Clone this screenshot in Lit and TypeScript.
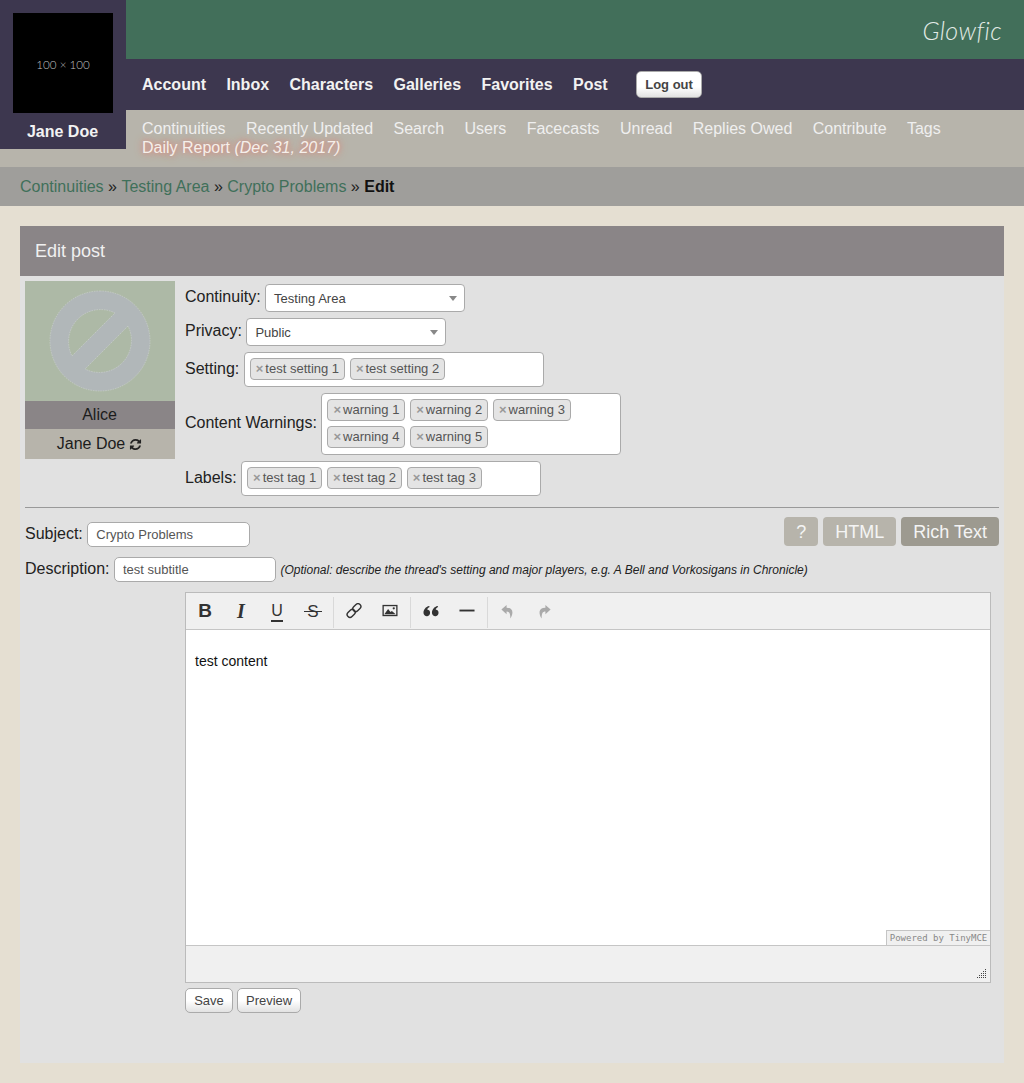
import { LitElement, html, css, svg } from "lit";
import { customElement } from "lit/decorators.js";

const tag = (t: string) => html`<span class="tag"><b>×</b>${t}</span>`;

@customElement("app-root")
export class AppRoot extends LitElement {
  static styles = css`
    :host { display: block; font-family: "Liberation Sans", Arial, sans-serif; font-size: 16px; color: #222; background: #e5dfd2; min-height: 1083px; position: relative; }
    * { box-sizing: border-box; }
    .user { position: absolute; left: 0; top: 0; width: 126px; height: 149px; background: #3d374f; padding-top: 13px; display: flex; flex-direction: column; align-items: center; z-index: 2; }
    .ph { width: 100px; height: 100px; background: #000; color: #c0c0c0; font: 300 11.6px "Lato", sans-serif; padding-top: 2px; display: flex; align-items: center; justify-content: center; }
    .uname { color: #f2f2f2; font-weight: bold; margin-top: 10px; line-height: 18px; padding-right: 1px; }
    .brand { height: 59px; background: #426f5a; display: flex; justify-content: flex-end; align-items: center; padding: 0 22px 0 0; }
    .logo { font-family: "Lato", sans-serif; font-weight: 300; font-style: italic; font-size: 25px; letter-spacing: 0.4px; color: #e3ebe6; }
    .nav { height: 51px; background: #3d374f; padding: 1px 0 0 142px; display: flex; align-items: center; color: #f2f2f2; font-weight: bold; gap: 20.4px; }
    .logout { margin: 0 0 1px 8px; height: 27px; width: 66px; border: 1px solid #aaa; border-radius: 5px; font: bold 13px "Liberation Sans", sans-serif; color: #444; background: linear-gradient(#fff 60%, #e2e2e2); padding: 0; }
    .sub { height: 57px; background: #b7b4ab; padding: 9px 60px 0 142px; color: #efefef; line-height: 19px; }
    .sub span { margin-right: 15.9px; display: inline-block; }
    .sub .daily { color: #f5efea; text-shadow: 0 0 5px #d98a7e, 0 0 8px #d98a7e; }
    .crumbs { height: 39px; background: #9f9e9b; padding-left: 20px; display: flex; align-items: center; white-space: pre; color: #222; }
    .crumbs a { color: #3f705a; }
    .crumbs strong { color: #111; }
    .card { margin: 20px 20px 0; background: #e1e1e1; height: 837px; }
    .title { height: 50px; background: #8a8587; color: #f0f0f0; font-size: 18px; padding-left: 15px; display: flex; align-items: center; }
    .body { padding: 5px; }
    .top { display: flex; gap: 10px; }
    .icon { width: 150px; flex: none; }
    .pic { height: 120px; background: #adb9a6; display: flex; align-items: center; justify-content: center; }
    .char { height: 28px; background: #8a8587; display: flex; align-items: center; justify-content: center; color: #1c1c1c; padding-right: 1px; }
    .alias { height: 30px; background: #b7b4ab; display: flex; align-items: center; justify-content: center; gap: 4px; color: #1c1c1c; padding-right: 1px; }
    .rows { display: flex; flex-direction: column; gap: 6px; padding-top: 3px; }
    .row { display: flex; align-items: center; gap: 4.5px; }
    .row > label { padding-bottom: 3px; }
    .row.t > label { padding-bottom: 1px; }
    .select { height: 28px; width: 200px; background: #fff; border: 1px solid #aaa; border-radius: 4px; font-size: 13px; color: #444; padding: 1px 8px 0; display: flex; align-items: center; justify-content: space-between; }
    .arrow { width: 0; height: 0; border: 4px solid transparent; border-top: 5px solid #888; border-bottom: 0; margin-right: -1px; }
    .tags { width: 300px; background: #fff; border: 1px solid #aaa; border-radius: 4px; padding: 5px 5px 6px; display: flex; flex-wrap: wrap; min-height: 35px; gap: 5px; }
    .tag { height: 22px; background: #e4e4e4; border: 1px solid #aaa; border-radius: 4px; font-size: 13px; color: #555; padding: 0 4.8px 1px 5px; display: flex; align-items: center; }
    .tag b { color: #999; margin-right: 2px; font-size: 13px; }
    hr { border: 0; border-top: 1px solid #999; margin: 11px 0 9px; height: 0; }
    .subj { display: flex; justify-content: space-between; align-items: flex-start; }
    .subj .row { padding-top: 5px; }
    input { font: 13px "Liberation Sans", sans-serif; color: #555; background: #fff; border: 1px solid #aaa; border-radius: 5px; height: 25px; padding: 0 8px; outline: 0; }
    .modes { display: flex; gap: 5px; }
    .mode { height: 29px; background: #b7b4ab; color: #f4f4f4; font-size: 18px; padding: 2px 12px 0; border-radius: 4px; display: flex; align-items: center; }
    .mode.on { background: #9d9a90; }
    .desc { margin-top: 10px; }
    .note { font-size: 12px; font-style: italic; color: #222; }
    .editor { margin: 10px 8px 0 160px; border: 1px solid #bbb; height: 391px; display: flex; flex-direction: column; background: #f0f0f0; }
    .toolbar { height: 37px; border-bottom: 1px solid #c5c5c5; display: flex; flex: none; padding-left: 1px; }
    .grp { display: flex; padding: 0 2px 0 0; position: relative; }
    .grp + .grp { padding-left: 2px; }
    .grp:not(:last-child)::after { content: ""; position: absolute; right: 0; top: 4px; bottom: 1px; width: 1px; background: #d9d9d9; }
    .grp:not(:last-child) { padding-right: 3px; }
    .tb { width: 36px; display: flex; align-items: center; justify-content: center; color: #333; font-size: 19px; }
    .tb.b { font-weight: bold; }
    .tb.i { font-family: "Liberation Serif", serif; font-style: italic; font-weight: bold; font-size: 20px; }
    .tb.u span { border-bottom: 2px solid #333; font-size: 16px; line-height: 16px; padding: 0 0 1px; margin-top: 2px; }
    .tb.s span { position: relative; font-size: 17px; line-height: 17px; }
    .tb.s span::after { content: ""; position: absolute; left: -3px; right: -3px; top: 8px; height: 1px; background: #333; }
    .content { flex: none; height: 316px; background: #fff; border-bottom: 1px solid #c5c5c5; padding: 23px 9px 0 9px; font-size: 14px; color: #111; line-height: 16px; position: relative; }
    .powered { position: absolute; right: 0; bottom: 0; width: 104px; height: 15px; background: #f0f0f0; border: 1px solid #c5c5c5; border-width: 1px 0 0 1px; font: 9px "DejaVu Sans Mono", monospace; color: #888; display: flex; align-items: center; justify-content: center; white-space: nowrap; }
    .status { flex: 1; display: flex; justify-content: flex-end; align-items: flex-end; padding: 0 3px 3px 0; }
    .btns { margin: 5px 0 0 160px; display: flex; gap: 4px; }
    .btn { height: 25px; border: 1px solid #aaa; border-radius: 5px; font: 13px "Liberation Sans", sans-serif; color: #444; background: linear-gradient(#fff 50%, #e2e2e2); padding: 0 8px; }
    .btn.save { width: 48px; }
    .btn.prev { width: 64px; }
  `;

  private tinyIcons() {
    return {
      link: svg`<g transform="rotate(-45 8 8)" fill="none" stroke="#333" stroke-width="1.5"><rect x="-1" y="5" width="9.5" height="6" rx="3"/><rect x="7.5" y="5" width="9.5" height="6" rx="3"/></g>`,
      image: svg`<rect x="0.7" y="2.7" width="14.6" height="10.6" fill="none" stroke="#333" stroke-width="1.4"/><path d="M2 12 L6 6.5 L8.5 9.5 L10 8.5 L14 12Z" fill="#333"/><circle cx="12" cy="5.6" r="1.2" fill="#333"/>`,
      quote: svg`<path d="M4 14 A3.6 3.6 0 0 1 0 10.2 C0 7 2.5 4 6 3.2 L6.6 4.3 C5 5.1 4.2 6 4 6.9 A3.6 3.6 0 0 1 4 14Z M13 14 A3.6 3.6 0 0 1 9 10.2 C9 7 11.5 4 15 3.2 L15.6 4.3 C14 5.1 13.2 6 13 6.9 A3.6 3.6 0 0 1 13 14Z" fill="#333"/>`,
      hr: svg`<rect x="0" y="7" width="16" height="2" fill="#333"/>`,
      undo: svg`<path d="M6.5 2 L1 7 L6.500 12 V9 C9.500 9 10.500 11 10.500 16.500 C13.500 12 14.500 5 6.500 5Z" fill="#aaa"/>`,
      redo: svg`<path d="M9.500 2 L15 7 L9.500 12 V9 C6.500 9 5.500 11 5.500 16.500 C2.500 12 1.500 5 9.500 5Z" fill="#aaa"/>`,
    };
  }

  render() {
    const i = this.tinyIcons();
    const ic = (c: unknown) => html`<span class="tb"><svg width="16" height="16" viewBox="0 0 16 17">${c}</svg></span>`;
    return html`
      <div class="user"><div class="ph">100 × 100</div><div class="uname">Jane Doe</div></div>
      <div class="brand"><span class="logo">Glowfic</span></div>
      <div class="nav">
        <span>Account</span><span>Inbox</span><span>Characters</span><span>Galleries</span><span>Favorites</span><span>Post</span>
        <button class="logout">Log out</button>
      </div>
      <div class="sub">
        <span>Continuities</span> <span>Recently Updated</span> <span>Search</span> <span>Users</span> <span>Facecasts</span> <span>Unread</span> <span>Replies Owed</span> <span>Contribute</span> <span>Tags</span>
        <span class="daily">Daily Report <i>(Dec 31, 2017)</i></span>
      </div>
      <div class="crumbs"><a>Continuities</a> » <a>Testing Area</a> » <a>Crypto Problems</a> » <strong>Edit</strong></div>
      <div class="card">
        <div class="title">Edit post</div>
        <div class="body">
          <div class="top">
            <div class="icon">
              <div class="pic">
                <svg width="102" height="102" viewBox="-51 -51 102 102">
                  <path fill="#b1b7b9" fill-rule="evenodd" stroke="#cfd3d0" stroke-width="0.6" stroke-dasharray="1.5 1"
                    d="M0 -50 A50 50 0 1 1 0 50 A50 50 0 1 1 0 -50Z M15 -28 A32 32 0 0 0 -28 15Z M28 -15 L-15 28 A32 32 0 0 0 28 -15Z"/>
                </svg>
              </div>
              <div class="char">Alice</div>
              <div class="alias">Jane Doe
                <svg width="13" height="13" viewBox="0 0 1792 1792"><path fill="#222" d="M1639 1056q0 5-1 7-64 268-268 434.500t-478 166.500q-146 0-282.500-55t-243.500-157l-129 129q-19 19-45 19t-45-19-19-45v-448q0-26 19-45t45-19h448q26 0 45 19t19 45-19 45l-137 137q71 66 161 102t187 36q134 0 250-65t186-179q11-17 53-117 8-23 30-23h192q13 0 22.500 9.500t9.500 22.500zm25-800v448q0 26-19 45t-45 19h-448q-26 0-45-19t-19-45 19-45l138-138q-148-137-349-137-134 0-250 65t-186 179q-11 17-53 117-8 23-30 23h-199q-13 0-22.500-9.500t-9.500-22.500v-7q65-268 270-434.500t480-166.500q146 0 284 55.500t245 156.500l130-129q19-19 45-19t45 19 19 45z"/></svg>
              </div>
            </div>
            <div class="rows">
              <div class="row"><label>Continuity:</label><div class="select">Testing Area<span class="arrow"></span></div></div>
              <div class="row"><label>Privacy:</label><div class="select">Public<span class="arrow"></span></div></div>
              <div class="row t"><label>Setting:</label><div class="tags">${tag("test setting 1")}${tag("test setting 2")}</div></div>
              <div class="row"><label>Content Warnings:</label><div class="tags">${["warning 1","warning 2","warning 3","warning 4","warning 5"].map(tag)}</div></div>
              <div class="row t"><label>Labels:</label><div class="tags">${tag("test tag 1")}${tag("test tag 2")}${tag("test tag 3")}</div></div>
            </div>
          </div>
          <hr />
          <div class="subj">
            <div class="row t"><label>Subject:</label><input style="width:163px" .value=${"Crypto Problems"} /></div>
            <div class="modes"><div class="mode">?</div><div class="mode">HTML</div><div class="mode on">Rich Text</div></div>
          </div>
          <div class="row t desc"><label>Description:</label><input style="width:162px" .value=${"test subtitle"} /><span class="note">(Optional: describe the thread's setting and major players, e.g. A Bell and Vorkosigans in Chronicle)</span></div>
          <div class="editor">
            <div class="toolbar">
              <div class="grp"><span class="tb b">B</span><span class="tb i">I</span><span class="tb u"><span>U</span></span><span class="tb s"><span>S</span></span></div>
              <div class="grp">${ic(i.link)}${ic(i.image)}</div>
              <div class="grp">${ic(i.quote)}${ic(i.hr)}</div>
              <div class="grp">${ic(i.undo)}${ic(i.redo)}</div>
            </div>
            <div class="content">test content<div class="powered">Powered by TinyMCE</div></div>
            <div class="status">
              <svg width="10" height="10" viewBox="0 0 10 10" fill="#444">
                ${[[8,0],[6,2],[8,2],[4,4],[6,4],[8,4],[2,6],[4,6],[6,6],[8,6],[0,8],[2,8],[4,8],[6,8],[8,8]].map(([x,y]) => svg`<rect x=${x} y=${y} width="1" height="1"/>`)}
              </svg>
            </div>
          </div>
          <div class="btns"><button class="btn save">Save</button><button class="btn prev">Preview</button></div>
        </div>
      </div>
    `;
  }
}
